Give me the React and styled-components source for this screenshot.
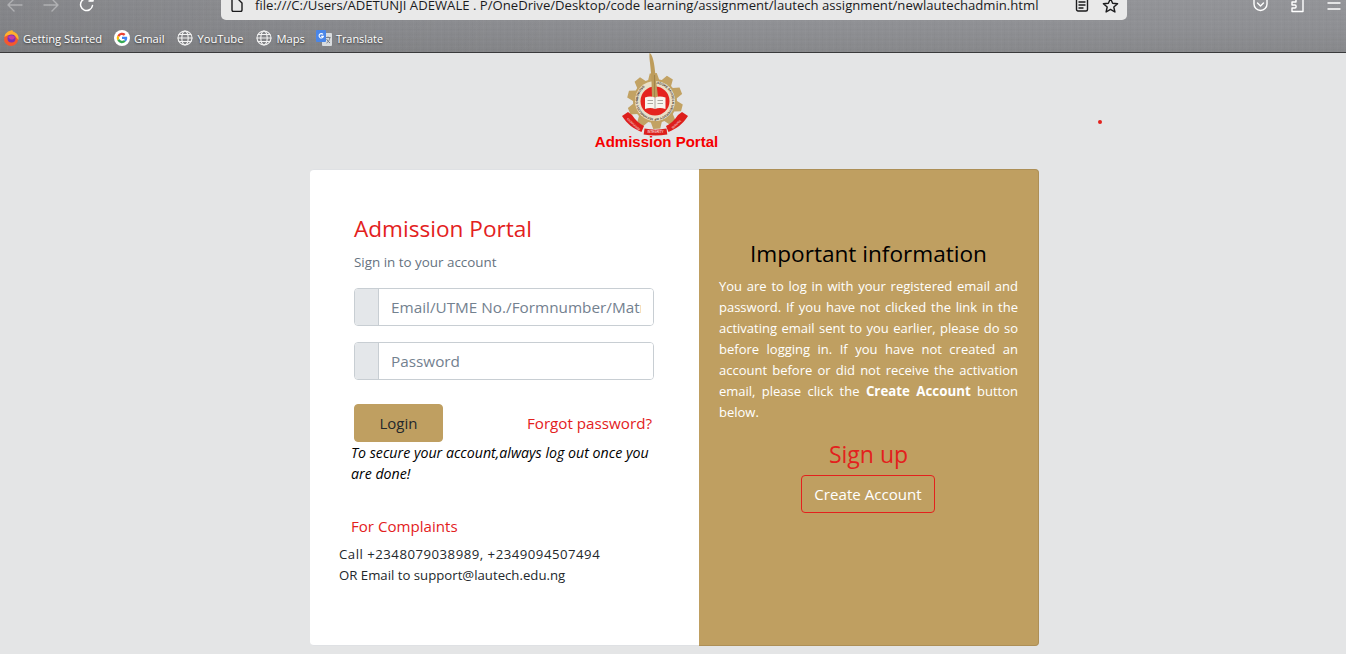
import React from "react";
import styled, { createGlobalStyle } from "styled-components";

const Global = createGlobalStyle`
  html, body { margin: 0; padding: 0; height: 654px; overflow: hidden; background: #e4e5e6; }
  * { box-sizing: border-box; }
  body { font-family: "Open Sans", "Noto Sans", sans-serif; font-size: 15px; color: #23282c; }
`;

const Chrome = styled.header`
  height: 53px;
  border-bottom: 1px solid #3a3a3c;
  background:
    repeating-linear-gradient(90deg, rgba(255,255,255,.014) 0 1px, transparent 1px 3px, rgba(0,0,0,.012) 3px 4px, transparent 4px 7px),
    repeating-linear-gradient(0deg, rgba(255,255,255,.014) 0 1px, transparent 1px 2px, rgba(0,0,0,.012) 2px 3px, transparent 3px 5px),
    linear-gradient(90deg, rgba(0,0,0,.09) 0%, rgba(0,0,0,0) 55%),
    linear-gradient(180deg, #939498 0%, #8f9094 50%, #87888b 100%);
  display: flex;
  flex-direction: column;
`;
const Toolbar = styled.div`
  height: 20px;
  display: flex;
  align-items: flex-start;
  overflow: hidden;
`;
const NavGroup = styled.div`
  width: 221px;
  height: 20px;
  display: flex;
  align-items: center;
  padding: 0 0 10px 5px;
  gap: 18px;
`;
const UrlBar = styled.div`
  width: 906px;
  height: 20px;
  background: #e9e9e9;
  border-radius: 0 0 5px 5px;
  display: flex;
  align-items: center;
  padding: 0 8px 10px 9px;
  color: #1b1b1d;
`;
const UrlText = styled.span`
  flex: 1;
  margin-left: 11px;
  font-size: 13.13px;
  white-space: nowrap;
  line-height: 10px;
`;
const UrlTools = styled.div`
  display: flex;
  gap: 13px;
  align-items: center;
`;
const RightTools = styled.div`
  flex: 1;
  height: 20px;
  display: flex;
  justify-content: flex-end;
  align-items: center;
  gap: 22px;
  padding: 0 5px 10px 0;
`;
const Bookmarks = styled.nav`
  height: 32px;
  display: flex;
  align-items: center;
  padding: 4px 0 0 3px;
`;
const Bookmark = styled.a`
  display: flex;
  align-items: center;
  gap: 4px;
  margin-right: ${(p) => p.$gap}px;
  color: #fff;
  font-size: ${(p) => p.$size || 11.2}px;
  text-shadow: 0 1px 2px #333;
  white-space: nowrap;
`;

const Main = styled.main`
  position: relative;
  display: flex;
  flex-direction: column;
  align-items: center;
`;
const RedDot = styled.span`
  position: absolute;
  left: 1098px;
  top: 67px;
  width: 4px;
  height: 4px;
  border-radius: 50%;
  background: #e3211d;
`;
const Brand = styled.div`
  height: 116px;
  margin-right: 33px;
  display: flex;
  flex-direction: column;
  align-items: center;
`;
const BrandTitle = styled.div`
  font-family: "Liberation Sans", Arial, sans-serif;
  font-weight: 700;
  font-size: 15px;
  line-height: 16px;
  color: #f60000;
  margin-top: -3px;
`;
const Card = styled.section`
  width: 729px;
  height: 477px;
  margin-left: 3px;
  display: flex;
`;
const LoginPane = styled.div`
  width: 389px;
  background: #fff;
  border: 1px solid #dfe1e4;
  border-left: none;
  border-right: none;
  border-radius: 4px 0 0 4px;
  padding: 42px 0 0 44px;
  display: flex;
  flex-direction: column;
`;
const Title = styled.h1`
  margin: 0;
  font-size: 22.6px;
  font-weight: 400;
  line-height: 34px;
  color: #e3211d;
`;
const Muted = styled.p`
  margin: 6px 0 0;
  font-size: 13.4px;
  line-height: 21px;
  color: #66737f;
`;
const InputGroup = styled.div`
  width: 300px;
  height: 38px;
  margin-top: ${(p) => p.$top}px;
  display: flex;
  flex: none;
  border: 1px solid #c8ced3;
  border-radius: 4px;
  overflow: hidden;
`;
const Prepend = styled.span`
  width: 24px;
  flex: none;
  background: #e4e7ea;
  border-right: 1px solid #c8ced3;
`;
const Input = styled.input`
  flex: 1;
  min-width: 0;
  border: 0;
  outline: 0;
  padding: 0 12px;
  font: inherit;
  font-size: 15.3px;
  color: #5c6873;
  background: #fff;
  &::placeholder { color: #73818f; opacity: 1; }
`;
const ActionRow = styled.div`
  width: 300px;
  margin-top: 24px;
  display: flex;
  justify-content: space-between;
  align-items: center;
`;
const LoginButton = styled.button`
  width: 89px;
  height: 38px;
  border: 1px solid #bf9f61;
  border-radius: 4px;
  background: #bf9f61;
  color: #23282c;
  font: inherit;
  font-size: 15px;
`;
const ForgotLink = styled.a`
  color: #e3211d;
  font-size: 15.2px;
  margin-right: 2px;
`;
const Note = styled.p`
  margin: 0 0 0 -3px;
  width: 310px;
  font-size: 14.2px;
  line-height: 21px;
  font-style: italic;
  color: #000;
`;
const Complaints = styled.h4`
  margin: 30px 0 0 -3px;
  font-size: 15.1px;
  font-weight: 400;
  line-height: 24px;
  color: #e3211d;
`;
const Contact = styled.div`
  margin: 6px 0 0 -15px;
  display: flex;
  flex-direction: column;
`;
const ContactLine = styled.span`
  font-size: 13.2px;
  line-height: 21px;
  letter-spacing: ${(p) => p.$spacing || 0}px;
  color: #23282c;
  white-space: nowrap;
`;
const InfoPane = styled.div`
  width: 340px;
  background: #bf9f61;
  border: 1px solid #ad8f56;
  border-left: none;
  border-radius: 0 4px 4px 0;
  padding: 66px 20px 0;
  display: flex;
  flex-direction: column;
  align-items: center;
`;
const InfoTitle = styled.h2`
  margin: 0;
  font-size: 22.6px;
  font-weight: 400;
  line-height: 36px;
  color: #000;
`;
const InfoText = styled.p`
  margin: 4px 0 0;
  width: 299px;
  font-size: 13px;
  line-height: 21px;
  text-align: justify;
  color: #fff;
  strong { font-weight: 700; font-size: 13.3px; }
`;
const SignUp = styled.h2`
  margin: 13px 0 0;
  font-size: 23px;
  font-weight: 400;
  line-height: 36px;
  color: #e3211d;
`;
const CreateButton = styled.button`
  width: 134px;
  height: 38px;
  margin-top: 3px;
  margin-right: 1px;
  border: 1px solid #e3211d;
  border-radius: 4px;
  background: transparent;
  color: #fff;
  font: inherit;
  font-size: 15.1px;
`;

const I = ({ w = 16, h = 16, color = "#fff", sw = 1.4, children, op = 1 }) => (
  <svg width={w} height={h} viewBox={`0 0 ${w} ${h}`} fill="none" stroke={color} strokeWidth={sw} strokeLinecap="round" strokeLinejoin="round" opacity={op} style={{ flex: "none" }}>
    {children}
  </svg>
);

const Globe = () => (
  <I w={16} h={16} color="#f2f2f2" sw={1.1}>
    <circle cx="8" cy="8" r="7" />
    <ellipse cx="8" cy="8" rx="3.2" ry="7" />
    <path d="M1 8h14" />
    <path d="M2 4.500h12M2 11.500h12" />
  </I>
);

const Firefox = () => (
  <svg width="16" height="16" viewBox="0 0 16 16" style={{ flex: "none" }}>
    <circle cx="8" cy="9" r="7" fill="#f5582e" />
    <path d="M1.500 7C2 3 5 1 9.500 0c-.5 1.500 2 2 3.500 3 2 1.500 3 4 2.500 7L12 6 5 5Z" fill="#ffb02c" />
    <circle cx="8.500" cy="8.500" r="4" fill="#7a2fb5" />
    <path d="M5 7c2-2 5-2 7 0-1 3-4 3-5 2Z" fill="#c23ca8" />
  </svg>
);

const GoogleG = () => (
  <svg width="16" height="16" viewBox="0 0 16 16" style={{ flex: "none" }}>
    <circle cx="8" cy="8" r="8" fill="#fff" />
    <path d="M3.400 5.400A5.200 5.200 0 0 1 11.500 4L9.900 5.700A3 3 0 0 0 5.200 6.900Z" fill="#ea4335" />
    <path d="M3.400 5.400l1.800 1.500a3 3 0 0 0 0 2.200l-1.800 1.500a5.200 5.200 0 0 1 0-5.200Z" fill="#fbbc05" />
    <path d="M3.400 10.600l1.800-1.500A3 3 0 0 0 10 10l1.700 1.500a5.200 5.200 0 0 1-8.300-.9Z" fill="#34a853" />
    <path d="M13.200 8c0 1.400-.5 2.600-1.500 3.500L10 10c.4-.3.7-.6.8-1H8V6.800h5c.1.400.2.800.2 1.200Z" fill="#4285f4" />
  </svg>
);

const TranslateIcon = () => (
  <svg width="16" height="16" viewBox="0 0 16 16" style={{ flex: "none" }}>
    <rect x="6" y="3" width="10" height="13" rx="1" fill="#d9dcdf" />
    <path d="M9.500 7.500h5M12 6.500v1M10.500 13c2-1 3-3 3.400-5.500M10.500 9c1 1.600 2 3 3.500 4" stroke="#7b8087" strokeWidth="1" fill="none" />
    <rect x="0" y="0" width="10" height="12" rx="1" fill="#4a86e8" />
    <path d="M7 4.400A2.200 2.200 0 1 0 7.400 6.400H5.200" stroke="#fff" strokeWidth="1.100" fill="none" />
  </svg>
);

const gearPoints = (cx, cy, rOut, rIn, teeth) => {
  const pts = [];
  const step = (Math.PI * 2) / teeth;
  for (let t = 0; t < teeth; t++) {
    const a = t * step - Math.PI / 2;
    [[-0.5, rIn], [-0.3, rOut], [0.1, rOut], [0.3, rIn]].forEach(([f, r]) => {
      const an = a + f * step;
      pts.push(`${(cx + r * Math.cos(an)).toFixed(2)},${(cy + r * Math.sin(an)).toFixed(2)}`);
    });
  }
  return pts.join(" ");
};

const Logo = () => (
  <svg width="80" height="84" viewBox="0 0 80 84" style={{ display: "block" }}>
    <defs>
      <path id="ringText" d="M39 30.800a17.200 17.200 0 1 1 -.01 0" />
    </defs>
    <polygon points={gearPoints(39, 48, 28, 22, 10)} fill="#c2a263" />
    <circle cx="39" cy="48" r="20" fill="#e9dfc8" />
    <text fontSize="3.100" fontFamily="Liberation Sans" fontWeight="700" fill="#3a2c22">
      <textPath href="#ringText">LADOKE AKINTOLA UNIVERSITY OF TECHNOLOGY OGBOMOSO</textPath>
    </text>
    <circle cx="39" cy="48" r="14.500" fill="#e5231e" />
    <path d="M33.500 0c2 .5 4.500 6 5.500 18 .6 8 2 16 3 26h-6c-.4-10-.4-18-1.100-25C34.300 10 33 5 33.500 0Z" fill="#bd9c5b" />
    <path d="M38.500 22v22" stroke="#8f7440" strokeWidth=".6" />
    <path d="M29 44.500c3.500-1.500 7-1.500 10 0 3-1.500 6.500-1.500 10.500 0V56c-4-1.300-7.500-1.300-10.500 0-3-1.300-6.500-1.300-10 0Z" fill="#f7f4ee" />
    <path d="M31.500 47.500h5.500M31.500 50.500h5.500M41.500 47.500h5.500M41.500 50.500h5.500M39 44.500V56" stroke="#8a8580" strokeWidth=".7" />
    <path d="M6 63l6-4 4 3c3 5 8 9 12 11l-2.500 6C18 76 11 71 6 63Z" fill="#dd1f1c" />
    <path d="M28.500 75.500c7 1.500 15 1.500 22 0l.8 6c-8 1.300-16 1.300-23.600 0Z" fill="#dd1f1c" />
    <path d="M72 63l-6-4-4 3c-3 5-8 9-12 11l2.500 6C60 76 67 71 72 63Z" fill="#dd1f1c" />
    <text x="39.500" y="80" textAnchor="middle" fontSize="3" fontFamily="Liberation Sans" fill="#fff">INTEGRITY</text>
    <text x="17" y="72" textAnchor="middle" fontSize="2.600" fontFamily="Liberation Sans" fill="#fff" transform="rotate(42 17 72)">KNOWLEDGE</text>
    <text x="61" y="72" textAnchor="middle" fontSize="2.600" fontFamily="Liberation Sans" fill="#fff" transform="rotate(-42 61 72)">SERVICE</text>
  </svg>
);

export default function App() {
  return (
    <>
      <Global />
      <Chrome>
        <Toolbar>
          <NavGroup>
            <I w={19} h={14} op={0.35}><path d="M3 7h14M3 7l6-6M3 7l6 6" /></I>
            <I w={19} h={14} op={0.35}><path d="M2 7h14M16 7l-6-6M16 7l-6 6" /></I>
            <I w={16} h={16} sw={1.5}><path d="M13.500 8.500A6 6 0 1 1 12 3.500" /><path d="M14 0v4h-4" /></I>
          </NavGroup>
          <UrlBar>
            <I w={14} h={14} color="#1b1b1d"><path d="M2 1v11a1.500 1.500 0 0 0 1.500 1.500h7A1.500 1.500 0 0 0 12 12V5L8 1Z" /></I>
            <UrlText>file:///C:/Users/ADETUNJI ADEWALE . P/OneDrive/Desktop/code learning/assignment/lautech assignment/newlautechadmin.html</UrlText>
            <UrlTools>
              <I w={14} h={14} color="#1b1b1d"><rect x="1.500" y="0" width="11" height="13" rx="1.500" /><path d="M4 4h6M4 7h6M4 10h4" /></I>
              <I w={17} h={17} color="#1b1b1d"><path d="M8.500 1.500l2.100 4.700 5 .5-3.800 3.300 1.100 5-4.400-2.600L4.100 15l1.100-5L1.400 6.700l5-.5Z" /></I>
            </UrlTools>
          </UrlBar>
          <RightTools>
            <I w={15} h={15}><path d="M1 1v5a6.500 6.500 0 0 0 13 0V1" /><path d="M4.500 5l3 3 3-3" /></I>
            <I w={15} h={15}><path d="M6 1h7v12.500H2V10h3c1.500 0 1.500-3 0-3H2V4h4Z" /></I>
            <I w={14} h={14}><path d="M1 5h12M1 11h12" /></I>
          </RightTools>
        </Toolbar>
        <Bookmarks>
          <Bookmark $gap={12}><Firefox />Getting Started</Bookmark>
          <Bookmark $gap={13}><GoogleG />Gmail</Bookmark>
          <Bookmark $gap={13}><Globe />YouTube</Bookmark>
          <Bookmark $gap={11}><Globe />Maps</Bookmark>
          <Bookmark $gap={0} $size={10.9}><TranslateIcon />Translate</Bookmark>
        </Bookmarks>
      </Chrome>
      <Main>
        <RedDot />
        <Brand>
          <Logo />
          <BrandTitle>Admission Portal</BrandTitle>
        </Brand>
        <Card>
          <LoginPane>
            <Title>Admission Portal</Title>
            <Muted>Sign in to your account</Muted>
            <InputGroup $top={15}>
              <Prepend />
              <Input placeholder="Email/UTME No./Formnumber/Matric No" />
            </InputGroup>
            <InputGroup $top={16}>
              <Prepend />
              <Input placeholder="Password" type="password" />
            </InputGroup>
            <ActionRow>
              <LoginButton>Login</LoginButton>
              <ForgotLink>Forgot password?</ForgotLink>
            </ActionRow>
            <Note>To secure your account,always log out once you are done!</Note>
            <Complaints>For Complaints</Complaints>
            <Contact>
              <ContactLine $spacing={0.5}>Call +2348079038989, +2349094507494</ContactLine>
              <ContactLine>OR Email to support@lautech.edu.ng</ContactLine>
            </Contact>
          </LoginPane>
          <InfoPane>
            <InfoTitle>Important information</InfoTitle>
            <InfoText>
              You are to log in with your registered email and password. If you have not clicked the link in the activating email sent to you earlier, please do so before logging in. If you have not created an account before or did not receive the activation email, please click the <strong>Create Account</strong> button below.
            </InfoText>
            <SignUp>Sign up</SignUp>
            <CreateButton>Create Account</CreateButton>
          </InfoPane>
        </Card>
      </Main>
    </>
  );
}
